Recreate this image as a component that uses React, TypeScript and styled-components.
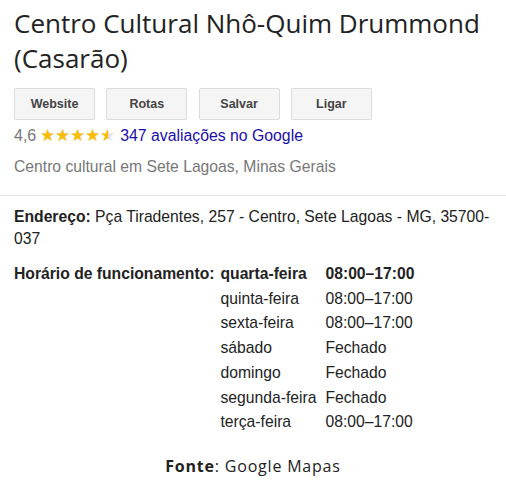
import React from "react";
import styled, { createGlobalStyle } from "styled-components";

const GlobalStyle = createGlobalStyle`
  body {
    margin: 0;
    background: #fff;
    font-family: "Liberation Sans", Arial, sans-serif;
  }
`;

const Page = styled.div`
  width: 506px;
  height: 481px;
  overflow: hidden;
  display: flex;
  flex-direction: column;
`;

const Header = styled.section`
  padding: 6px 14px 0;
`;

const Title = styled.h1`
  margin: 0;
  font-family: "Open Sans", sans-serif;
  font-weight: 400;
  font-size: 26px;
  line-height: 35px;
  color: #222;
`;

const Actions = styled.div`
  display: flex;
  gap: 11.3px;
  margin-top: 12px;
`;

const ActionButton = styled.button`
  width: 81px;
  height: 32px;
  padding: 0;
  background: #f5f5f5;
  border: 1px solid #dcdcdc;
  border-radius: 2px;
  font-family: "Liberation Sans", Arial, sans-serif;
  font-weight: 700;
  font-size: 12.5px;
  color: #444;
`;

const RatingRow = styled.div`
  display: flex;
  align-items: center;
  gap: 3px;
  margin-top: 6px;
  height: 20px;
  font-size: 16px;
  color: #777;
`;

const Stars = styled.span`
  position: relative;
  display: inline-block;
  font-size: 17px;
  line-height: 20px;
  color: #e0e0e0;
  margin: 0 2px 0 1px;
`;

const StarsFill = styled.span`
  position: absolute;
  left: 0;
  top: 0;
  overflow: hidden;
  white-space: nowrap;
  color: #fbbc04;
`;

const ReviewsLink = styled.a`
  color: #1a0dab;
  text-decoration: none;
  font-size: 15.8px;
`;

const Category = styled.div`
  margin-top: 11px;
  font-size: 15.7px;
  line-height: 20px;
  color: #777;
`;

const Divider = styled.hr`
  margin: 18px 0 0;
  border: 0;
  border-top: 1px solid #e2e2e2;
`;

const Details = styled.section`
  padding: 10px 14px 0;
  font-size: 15.7px;
  color: #222;
`;

const Address = styled.p`
  margin: 0;
  line-height: 22px;
`;

const Label = styled.b`
  font-weight: 700;
`;

const Hours = styled.div`
  display: flex;
  margin-top: 12px;
`;

const HoursLabel = styled.div`
  font-weight: 700;
  line-height: 24.7px;
  margin-right: 6px;
`;

const HoursTable = styled.div`
  display: grid;
  grid-template-columns: 105px auto;
  line-height: 24.7px;
`;

const Cell = styled.div<{ $bold?: boolean }>`
  font-weight: ${({ $bold }) => ($bold ? 700 : 400)};
  white-space: nowrap;
`;

const Caption = styled.p`
  margin: auto 0 0;
  padding-bottom: 4px;
  text-align: center;
  font-family: "Open Sans", sans-serif;
  font-size: 16px;
  letter-spacing: 0.8px;
  color: #222;
`;

const hours: [string, string][] = [
  ["quarta-feira", "08:00–17:00"],
  ["quinta-feira", "08:00–17:00"],
  ["sexta-feira", "08:00–17:00"],
  ["sábado", "Fechado"],
  ["domingo", "Fechado"],
  ["segunda-feira", "Fechado"],
  ["terça-feira", "08:00–17:00"],
];

export default function App() {
  const rating = 4.5;
  return (
    <>
      <GlobalStyle />
      <Page>
        <Header>
          <Title>
            Centro Cultural Nhô-Quim Drummond
            <br />
            (Casarão)
          </Title>
          <Actions>
            <ActionButton>Website</ActionButton>
            <ActionButton>Rotas</ActionButton>
            <ActionButton>Salvar</ActionButton>
            <ActionButton>Ligar</ActionButton>
          </Actions>
          <RatingRow>
            <span>4,6</span>
            <Stars>
              ★★★★★
              <StarsFill style={{ width: `${(rating / 5) * 100}%` }}>
                ★★★★★
              </StarsFill>
            </Stars>
            <ReviewsLink href="#">347 avaliações no Google</ReviewsLink>
          </RatingRow>
          <Category>Centro cultural em Sete Lagoas, Minas Gerais</Category>
        </Header>
        <Divider />
        <Details>
          <Address>
            <Label>Endereço:</Label> Pça Tiradentes, 257 - Centro, Sete Lagoas - MG, 35700-037
          </Address>
          <Hours>
            <HoursLabel>Horário de funcionamento:</HoursLabel>
            <HoursTable>
              {hours.map(([day, time], i) => (
                <React.Fragment key={day}>
                  <Cell $bold={i === 0}>{day}</Cell>
                  <Cell $bold={i === 0}>{time}</Cell>
                </React.Fragment>
              ))}
            </HoursTable>
          </Hours>
        </Details>
        <Caption>
          <b>Fonte</b>: Google Mapas
        </Caption>
      </Page>
    </>
  );
}
